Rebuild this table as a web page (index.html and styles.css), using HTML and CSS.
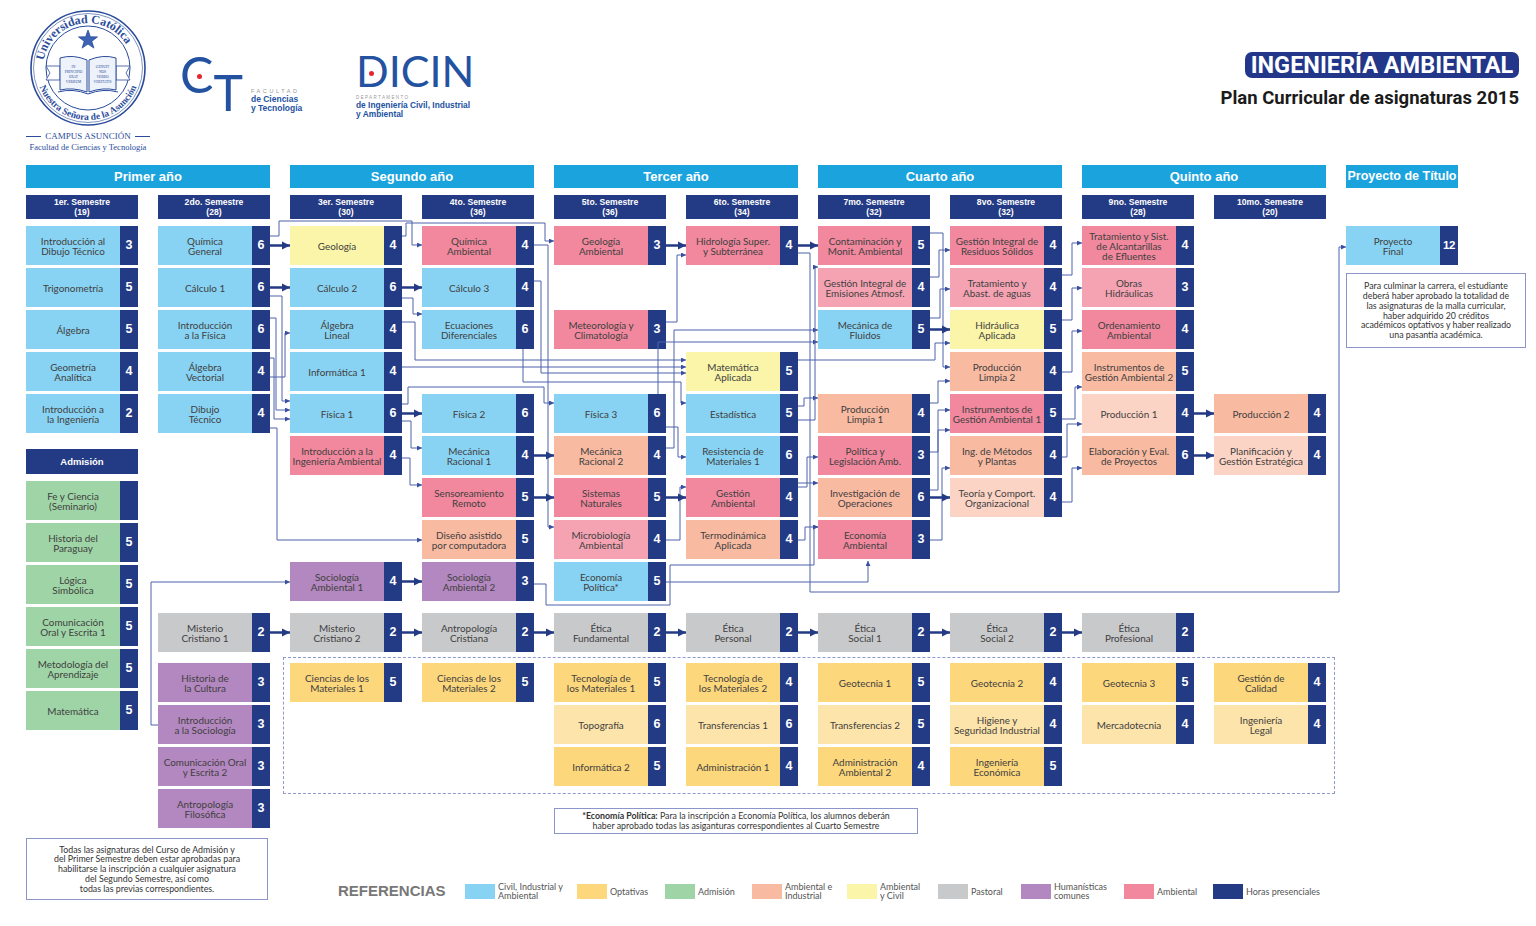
FILE: index.html
```html
<!DOCTYPE html>
<html lang="es">
<head>
<meta charset="utf-8">
<title>Ingeniería Ambiental - Plan Curricular 2015</title>
<link rel="stylesheet" href="styles.css">
</head>
<body>
<div class="page">
  <header class="top">
    <div class="seal-block">
      <svg class="seal" viewBox="0 0 124 122" aria-label="Universidad Católica">
        <defs>
          <path id="arcTop" d="M19.7 75.4 A45 45 0 1 1 104.3 75.4"/>
          <path id="arcBot" d="M10.8 51 A52 52 0 1 0 113.2 51"/>
        </defs>
        <circle cx="62" cy="60" r="57" fill="none" stroke="#2b4c9b" stroke-width="1.6"/>
        <circle cx="62" cy="60" r="54.5" fill="none" stroke="#2b4c9b" stroke-width=".6"/>
        <circle cx="62" cy="60" r="42" fill="none" stroke="#2b4c9b" stroke-width="1"/>
        <text class="seal-top"><textPath href="#arcTop" startOffset="45%" text-anchor="middle">Universidad Católica</textPath></text>
        <text class="seal-bot"><textPath href="#arcBot" startOffset="50%" text-anchor="middle">Nuestra Señora de la Asunción</textPath></text>
        <polygon points="62,22 64.35,28.76 71.51,28.91 65.8,33.24 67.88,40.09 62,36 56.12,40.09 58.2,33.24 52.49,28.91 59.65,28.76" fill="#3d63b5" stroke="#2b4c9b" stroke-width=".8"/>
        <path d="M20 58 L34 58 L34 72 L20 72 L24 65 Z" fill="#fff" stroke="#2b4c9b" stroke-width=".8"/>
        <path d="M90 58 L104 58 L100 65 L104 72 L90 72 Z" fill="#fff" stroke="#2b4c9b" stroke-width=".8"/>
        <path d="M34 50 Q47 46 61 52 L61 84 Q47 79 34 82 Z" fill="#eef2fa" stroke="#2b4c9b" stroke-width="1"/>
        <path d="M63 52 Q77 46 90 50 L90 82 Q77 79 63 84 Z" fill="#eef2fa" stroke="#2b4c9b" stroke-width="1"/>
        <path d="M32 84 Q47 80 62 86 Q77 80 92 84" fill="none" stroke="#2b4c9b" stroke-width="1"/>
        <g class="book-txt">
          <text x="47.5" y="60">IN</text>
          <text x="47.5" y="65">PRINCIPIO</text>
          <text x="47.5" y="70">ERAT</text>
          <text x="47.5" y="75">VERBUM</text>
          <text x="76.5" y="60">GENUIT</text>
          <text x="76.5" y="65">NOS</text>
          <text x="76.5" y="70">VERBO</text>
          <text x="76.5" y="75">VERITATIS</text>
        </g>
      </svg>
      <div class="campus">CAMPUS ASUNCIÓN</div>
      <div class="fac">Facultad de Ciencias y Tecnología</div>
    </div>

    <div class="ct">
      <div class="ct-mark"><span class="ct-c">C</span><span class="ct-t">T</span><span class="reddot ct-dot"></span></div>
      <div class="ct-txt"><span class="spaced">FACULTAD</span><b>de Ciencias</b><b>y Tecnología</b></div>
    </div>

    <div class="dicin">
      <div class="dicin-word">DICIN<span class="reddot dicin-dot"></span></div>
      <div class="dicin-sub"><span class="spaced small">DEPARTAMENTO</span><b>de Ingeniería Civil, Industrial</b><b>y Ambiental</b></div>
    </div>

    <div class="title">
      <div class="pill">INGENIERÍA AMBIENTAL</div>
      <div class="subtitle">Plan Curricular de asignaturas 2015</div>
    </div>
  </header>

  <main class="chart">
    <div class="optbox"></div>

    <div class="year k1 span2">Primer año</div>
    <div class="year k3 span2">Segundo año</div>
    <div class="year k5 span2">Tercer año</div>
    <div class="year k7 span2">Cuarto año</div>
    <div class="year k9 span2">Quinto año</div>
    <div class="year k11">Proyecto de Título</div>

    <div class="sem k1">1er. Semestre<br>(19)</div>
    <div class="sem k2">2do. Semestre<br>(28)</div>
    <div class="sem k3">3er. Semestre<br>(30)</div>
    <div class="sem k4">4to. Semestre<br>(36)</div>
    <div class="sem k5">5to. Semestre<br>(36)</div>
    <div class="sem k6">6to. Semestre<br>(34)</div>
    <div class="sem k7">7mo. Semestre<br>(32)</div>
    <div class="sem k8">8vo. Semestre<br>(32)</div>
    <div class="sem k9">9no. Semestre<br>(28)</div>
    <div class="sem k10">10mo. Semestre<br>(20)</div>

    <!-- 1er semestre -->
    <div class="cell blue k1 r1"><span class="nm">Introducción al<br>Dibujo Técnico</span><b class="hr">3</b></div>
    <div class="cell blue k1 r2"><span class="nm">Trigonometría</span><b class="hr">5</b></div>
    <div class="cell blue k1 r3"><span class="nm">Álgebra</span><b class="hr">5</b></div>
    <div class="cell blue k1 r4"><span class="nm">Geometría<br>Analítica</span><b class="hr">4</b></div>
    <div class="cell blue k1 r5"><span class="nm">Introducción a<br>la Ingeniería</span><b class="hr">2</b></div>

    <div class="admis">
      <div class="admis-h">Admisión</div>
      <div class="cell green"><span class="nm">Fe y Ciencia<br>(Seminario)</span><b class="hr"></b></div>
      <div class="cell green"><span class="nm">Historia del<br>Paraguay</span><b class="hr">5</b></div>
      <div class="cell green"><span class="nm">Lógica<br>Simbólica</span><b class="hr">5</b></div>
      <div class="cell green"><span class="nm">Comunicación<br>Oral y Escrita 1</span><b class="hr">5</b></div>
      <div class="cell green"><span class="nm">Metodología del<br>Aprendizaje</span><b class="hr">5</b></div>
      <div class="cell green"><span class="nm">Matemática</span><b class="hr">5</b></div>
    </div>

    <!-- 2do semestre -->
    <div class="cell blue k2 r1"><span class="nm">Química<br>General</span><b class="hr">6</b></div>
    <div class="cell blue k2 r2"><span class="nm">Cálculo 1</span><b class="hr">6</b></div>
    <div class="cell blue k2 r3"><span class="nm">Introducción<br>a la Física</span><b class="hr">6</b></div>
    <div class="cell blue k2 r4"><span class="nm">Álgebra<br>Vectorial</span><b class="hr">4</b></div>
    <div class="cell blue k2 r5"><span class="nm">Dibujo<br>Técnico</span><b class="hr">4</b></div>
    <div class="cell gray k2 rp"><span class="nm">Misterio<br>Cristiano 1</span><b class="hr">2</b></div>
    <div class="cell purple k2 o1"><span class="nm">Historia de<br>la Cultura</span><b class="hr">3</b></div>
    <div class="cell purple k2 o2"><span class="nm">Introducción<br>a la Sociología</span><b class="hr">3</b></div>
    <div class="cell purple k2 o3"><span class="nm">Comunicación Oral<br>y Escrita 2</span><b class="hr">3</b></div>
    <div class="cell purple k2 o4"><span class="nm">Antropología<br>Filosófica</span><b class="hr">3</b></div>

    <!-- 3er semestre -->
    <div class="cell yellow k3 r1"><span class="nm">Geología</span><b class="hr">4</b></div>
    <div class="cell blue k3 r2"><span class="nm">Cálculo 2</span><b class="hr">6</b></div>
    <div class="cell blue k3 r3"><span class="nm">Álgebra<br>Lineal</span><b class="hr">4</b></div>
    <div class="cell blue k3 r4"><span class="nm">Informática 1</span><b class="hr">4</b></div>
    <div class="cell blue k3 r5"><span class="nm">Física 1</span><b class="hr">6</b></div>
    <div class="cell pink k3 r6"><span class="nm">Introducción a la<br>Ingeniería Ambiental</span><b class="hr">4</b></div>
    <div class="cell purple k3 r9"><span class="nm">Sociología<br>Ambiental 1</span><b class="hr">4</b></div>
    <div class="cell gray k3 rp"><span class="nm">Misterio<br>Cristiano 2</span><b class="hr">2</b></div>
    <div class="cell opt k3 o1"><span class="nm">Ciencias de los<br>Materiales 1</span><b class="hr">5</b></div>

    <!-- 4to semestre -->
    <div class="cell pink k4 r1"><span class="nm">Química<br>Ambiental</span><b class="hr">4</b></div>
    <div class="cell blue k4 r2"><span class="nm">Cálculo 3</span><b class="hr">4</b></div>
    <div class="cell blue k4 r3"><span class="nm">Ecuaciones<br>Diferenciales</span><b class="hr">6</b></div>
    <div class="cell blue k4 r5"><span class="nm">Física 2</span><b class="hr">6</b></div>
    <div class="cell blue k4 r6"><span class="nm">Mecánica<br>Racional 1</span><b class="hr">4</b></div>
    <div class="cell pink k4 r7"><span class="nm">Sensoreamiento<br>Remoto</span><b class="hr">5</b></div>
    <div class="cell salmon k4 r8"><span class="nm">Diseño asistido<br>por computadora</span><b class="hr">5</b></div>
    <div class="cell purple k4 r9"><span class="nm">Sociología<br>Ambiental 2</span><b class="hr">3</b></div>
    <div class="cell gray k4 rp"><span class="nm">Antropología<br>Cristiana</span><b class="hr">2</b></div>
    <div class="cell opt k4 o1"><span class="nm">Ciencias de los<br>Materiales 2</span><b class="hr">5</b></div>

    <!-- 5to semestre -->
    <div class="cell pink k5 r1"><span class="nm">Geología<br>Ambiental</span><b class="hr">3</b></div>
    <div class="cell pink k5 r3"><span class="nm">Meteorología y<br>Climatología</span><b class="hr">3</b></div>
    <div class="cell blue k5 r5"><span class="nm">Física 3</span><b class="hr">6</b></div>
    <div class="cell salmon k5 r6"><span class="nm">Mecánica<br>Racional 2</span><b class="hr">4</b></div>
    <div class="cell pink k5 r7"><span class="nm">Sistemas<br>Naturales</span><b class="hr">5</b></div>
    <div class="cell lpink k5 r8"><span class="nm">Microbiología<br>Ambiental</span><b class="hr">4</b></div>
    <div class="cell blue k5 r9"><span class="nm">Economía<br>Política*</span><b class="hr">5</b></div>
    <div class="cell gray k5 rp"><span class="nm">Ética<br>Fundamental</span><b class="hr">2</b></div>
    <div class="cell opt k5 o1"><span class="nm">Tecnología de<br>los Materiales 1</span><b class="hr">5</b></div>
    <div class="cell optl k5 o2"><span class="nm">Topografía</span><b class="hr">6</b></div>
    <div class="cell opt k5 o3"><span class="nm">Informática 2</span><b class="hr">5</b></div>

    <!-- 6to semestre -->
    <div class="cell pink k6 r1"><span class="nm">Hidrología Super.<br>y Subterránea</span><b class="hr">4</b></div>
    <div class="cell yellow k6 r4"><span class="nm">Matemática<br>Aplicada</span><b class="hr">5</b></div>
    <div class="cell blue k6 r5"><span class="nm">Estadística</span><b class="hr">5</b></div>
    <div class="cell blue k6 r6"><span class="nm">Resistencia de<br>Materiales 1</span><b class="hr">6</b></div>
    <div class="cell pink k6 r7"><span class="nm">Gestión<br>Ambiental</span><b class="hr">4</b></div>
    <div class="cell salmon k6 r8"><span class="nm">Termodinámica<br>Aplicada</span><b class="hr">4</b></div>
    <div class="cell gray k6 rp"><span class="nm">Ética<br>Personal</span><b class="hr">2</b></div>
    <div class="cell opt k6 o1"><span class="nm">Tecnología de<br>los Materiales 2</span><b class="hr">4</b></div>
    <div class="cell optl k6 o2"><span class="nm">Transferencias 1</span><b class="hr">6</b></div>
    <div class="cell opt k6 o3"><span class="nm">Administración 1</span><b class="hr">4</b></div>

    <!-- 7mo semestre -->
    <div class="cell pink k7 r1"><span class="nm">Contaminación y<br>Monit. Ambiental</span><b class="hr">5</b></div>
    <div class="cell lpink k7 r2"><span class="nm">Gestión Integral de<br>Emisiones Atmosf.</span><b class="hr">4</b></div>
    <div class="cell blue k7 r3"><span class="nm">Mecánica de<br>Fluidos</span><b class="hr">5</b></div>
    <div class="cell salmon k7 r5"><span class="nm">Producción<br>Limpia 1</span><b class="hr">4</b></div>
    <div class="cell pink k7 r6"><span class="nm">Política y<br>Legislación Amb.</span><b class="hr">3</b></div>
    <div class="cell salmon k7 r7"><span class="nm">Investigación de<br>Operaciones</span><b class="hr">6</b></div>
    <div class="cell pink k7 r8"><span class="nm">Economía<br>Ambiental</span><b class="hr">3</b></div>
    <div class="cell gray k7 rp"><span class="nm">Ética<br>Social 1</span><b class="hr">2</b></div>
    <div class="cell opt k7 o1"><span class="nm">Geotecnia 1</span><b class="hr">5</b></div>
    <div class="cell optl k7 o2"><span class="nm">Transferencias 2</span><b class="hr">5</b></div>
    <div class="cell opt k7 o3"><span class="nm">Administración<br>Ambiental 2</span><b class="hr">4</b></div>

    <!-- 8vo semestre -->
    <div class="cell pink k8 r1"><span class="nm">Gestión Integral de<br>Residuos Sólidos</span><b class="hr">4</b></div>
    <div class="cell lpink k8 r2"><span class="nm">Tratamiento y<br>Abast. de aguas</span><b class="hr">4</b></div>
    <div class="cell yellow k8 r3"><span class="nm">Hidráulica<br>Aplicada</span><b class="hr">5</b></div>
    <div class="cell salmon k8 r4"><span class="nm">Producción<br>Limpia 2</span><b class="hr">4</b></div>
    <div class="cell pink k8 r5"><span class="nm">Instrumentos de<br>Gestión Ambiental 1</span><b class="hr">5</b></div>
    <div class="cell salmon k8 r6"><span class="nm">Ing. de Métodos<br>y Plantas</span><b class="hr">4</b></div>
    <div class="cell lsalmon k8 r7"><span class="nm">Teoría y Comport.<br>Organizacional</span><b class="hr">4</b></div>
    <div class="cell gray k8 rp"><span class="nm">Ética<br>Social 2</span><b class="hr">2</b></div>
    <div class="cell opt k8 o1"><span class="nm">Geotecnia 2</span><b class="hr">4</b></div>
    <div class="cell optl k8 o2"><span class="nm">Higiene y<br>Seguridad Industrial</span><b class="hr">4</b></div>
    <div class="cell opt k8 o3"><span class="nm">Ingeniería<br>Económica</span><b class="hr">5</b></div>

    <!-- 9no semestre -->
    <div class="cell pink k9 r1"><span class="nm">Tratamiento y Sist.<br>de Alcantarillas<br>de Efluentes</span><b class="hr">4</b></div>
    <div class="cell lpink k9 r2"><span class="nm">Obras<br>Hidráulicas</span><b class="hr">3</b></div>
    <div class="cell pink k9 r3"><span class="nm">Ordenamiento<br>Ambiental</span><b class="hr">4</b></div>
    <div class="cell salmon k9 r4"><span class="nm">Instrumentos de<br>Gestión Ambiental 2</span><b class="hr">5</b></div>
    <div class="cell lsalmon k9 r5"><span class="nm">Producción 1</span><b class="hr">4</b></div>
    <div class="cell salmon k9 r6"><span class="nm">Elaboración y Eval.<br>de Proyectos</span><b class="hr">6</b></div>
    <div class="cell gray k9 rp"><span class="nm">Ética<br>Profesional</span><b class="hr">2</b></div>
    <div class="cell opt k9 o1"><span class="nm">Geotecnia 3</span><b class="hr">5</b></div>
    <div class="cell optl k9 o2"><span class="nm">Mercadotecnia</span><b class="hr">4</b></div>

    <!-- 10mo semestre -->
    <div class="cell salmon k10 r5"><span class="nm">Producción 2</span><b class="hr">4</b></div>
    <div class="cell lsalmon k10 r6"><span class="nm">Planificación y<br>Gestión Estratégica</span><b class="hr">4</b></div>
    <div class="cell opt k10 o1"><span class="nm">Gestión de<br>Calidad</span><b class="hr">4</b></div>
    <div class="cell optl k10 o2"><span class="nm">Ingeniería<br>Legal</span><b class="hr">4</b></div>

    <!-- Proyecto -->
    <div class="cell blue k11 r1"><span class="nm">Proyecto<br>Final</span><b class="hr">12</b></div>
    <div class="note note-pf">Para culminar la carrera, el estudiante<br>deberá haber aprobado la totalidad de<br>las asignaturas de la malla curricular,<br>haber adquirido 20 créditos<br>académicos optativos y haber realizado<br>una pasantía académica.</div>

    <div class="note note-ep"><span><b>*Economía Política:</b> Para la inscripción a Economía Política, los alumnos deberán<br>haber aprobado todas las asiganturas correspondientes al Cuarto Semestre</span></div>
  </main>

  <footer class="foot">
    <div class="note note-adm">Todas las asignaturas del Curso de Admisión y<br>del Primer Semestre deben estar aprobadas para<br>habilitarse la inscripción a cualquier asignatura<br>del Segundo Semestre, así como<br>todas las previas correspondientes.</div>
    <div class="legend">
      <div class="ref">REFERENCIAS</div>
      <div class="lg"><i class="sw blue"></i><span>Civil, Industrial y<br>Ambiental</span></div>
      <div class="lg"><i class="sw opt"></i><span>Optativas</span></div>
      <div class="lg"><i class="sw green"></i><span>Admisión</span></div>
      <div class="lg"><i class="sw salmon"></i><span>Ambiental e<br>Industrial</span></div>
      <div class="lg"><i class="sw yellow"></i><span>Ambiental<br>y Civil</span></div>
      <div class="lg"><i class="sw gray"></i><span>Pastoral</span></div>
      <div class="lg"><i class="sw purple"></i><span>Humanísticas<br>comunes</span></div>
      <div class="lg"><i class="sw pink"></i><span>Ambiental</span></div>
      <div class="lg"><i class="sw navy"></i><span>Horas presenciales</span></div>
    </div>
  </footer>

  <svg class="links" width="1536" height="926" viewBox="0 0 1536 926">
    <defs>
      <marker id="ah" viewBox="0 0 10 10" refX="10" refY="5" markerWidth="8" markerHeight="9" markerUnits="userSpaceOnUse" orient="auto"><path d="M0,0 L10,5 L0,10 z" fill="#233a85"/></marker>
      <marker id="as" viewBox="0 0 10 10" refX="10" refY="5" markerWidth="5" markerHeight="5" markerUnits="userSpaceOnUse" orient="auto"><path d="M0,0 L10,5 L0,10 z" fill="#3a4f9f"/></marker>
    </defs>
    <g class="thin">
      <path d="M270 236 H279 V221 H412 V245 H422"/>
      <path d="M402 236 H406 V223 H545 V241 H554"/>
      <path d="M270 296 H282 V401 H290"/>
      <path d="M270 318 H276 V410 H290"/>
      <path d="M270 358 H274 V419 H290"/>
      <path d="M270 377 H285 V333 H290"/>
      <path d="M270 428 H277 V540 H422"/>
      <path d="M402 298 H413 V314 H422"/>
      <path d="M402 322 H415 V360 H686"/>
      <path d="M402 367 H686"/>
      <path d="M534 281 H541 V373 H686"/>
      <path d="M523 349 V382 H681 V403 H686"/>
      <path d="M402 404 H408 V387 H544 V403 H554"/>
      <path d="M402 421 H411 V448 H422"/>
      <path d="M402 458 H410 V485 H422"/>
      <path d="M534 245 H548 V527 H554"/>
      <path d="M666 322 H677 V255 H686"/>
      <path d="M658 394 V342 H818"/>
      <path d="M666 448 H674 V330 H818"/>
      <path d="M666 427 H678 V457 H686"/>
      <path d="M666 540 H680 V487 H686"/>
      <path d="M666 582 H868 V561"/>
      <path d="M534 584 H546 V605 H670 V565 H814 V527 H818"/>
      <path d="M798 253 H810 V592 H1339 V247 H1346"/>
      <path d="M798 360 H935 V343 H950"/>
      <path d="M798 406 H804 V398 H818"/>
      <path d="M798 420 H815 V267 H818"/>
      <path d="M798 487 H807 V457 H818"/>
      <path d="M798 483 H818"/>
      <path d="M798 540 H805 V527 H818"/>
      <path d="M930 233 H943 V367 H950"/>
      <path d="M930 277 H939 V250 H950"/>
      <path d="M930 318 H940 V289 H950"/>
      <path d="M930 403 H938 V381 H950"/>
      <path d="M930 452 H938 V410 H950"/>
      <path d="M930 490 H938 V430 H950"/>
      <path d="M930 540 H942 V468 H950"/>
      <path d="M1062 275 H1072 V243 H1082"/>
      <path d="M1062 320 H1072 V288 H1082"/>
      <path d="M1062 372 H1072 V331 H1082"/>
      <path d="M1062 419 H1075 V387 H1082"/>
      <path d="M1062 457 H1067 V424 H1082"/>
      <path d="M1062 502 H1072 V468 H1082"/>
      <path d="M158 725 H151 V582 H290"/>
    </g>
    <g class="thick">
      <path d="M270 245.5 H290"/>
      <path d="M270 287.5 H290"/>
      <path d="M402 287.5 H422"/>
      <path d="M402 413.5 H422"/>
      <path d="M534 455.5 H554"/>
      <path d="M534 497.5 H554"/>
      <path d="M402 581.5 H422"/>
      <path d="M666 245.5 H686"/>
      <path d="M666 497.5 H686"/>
      <path d="M798 245.5 H818"/>
      <path d="M930 329.5 H950"/>
      <path d="M930 497.5 H950"/>
      <path d="M1194 413.5 H1214"/>
      <path d="M1194 455.5 H1214"/>
      <path d="M270 632.5 H290"/>
      <path d="M402 632.5 H422"/>
      <path d="M534 632.5 H554"/>
      <path d="M666 632.5 H686"/>
      <path d="M798 632.5 H818"/>
      <path d="M930 632.5 H950"/>
      <path d="M1062 632.5 H1082"/>
    </g>
  </svg>
</div>
</body>
</html>
```

FILE: styles.css
```css
* { box-sizing: border-box; }
body { margin: 0; background: #fff; }

.page {
  position: relative;
  width: 1536px;
  height: 926px;
  overflow: hidden;
  background: #fff;
  font-family: Lato, "Noto Sans", sans-serif;
  color: #3a3a3a;
}

/* ---------- header ---------- */
.top {
  display: flex;
  height: 160px;
  padding: 0 17px 0 26px;
}
.seal-block {
  width: 124px;
  flex-shrink: 0;
  display: flex;
  flex-direction: column;
  align-items: center;
}
.seal { width: 124px; height: 122px; margin-top: 8px; display: block; }
.seal-top { font-family: "Liberation Serif", serif; font-weight: bold; font-size: 12px; fill: #2b4c9b; }
.seal-bot { font-family: "Liberation Serif", serif; font-weight: bold; font-size: 9.5px; fill: #2b4c9b; }
.book-txt text { font-family: "Liberation Serif", serif; font-size: 3.6px; fill: #2b4c9b; text-anchor: middle; }
.campus {
  display: flex;
  align-items: center;
  gap: 4px;
  margin-top: 1px;
  font-family: "Liberation Serif", serif;
  font-size: 9px;
  line-height: 11px;
  color: #2b4c9b;
  white-space: nowrap;
}
.campus::before, .campus::after {
  content: "";
  width: 15px;
  height: 1px;
  background: #2b4c9b;
}
.fac {
  font-family: "Liberation Serif", serif;
  font-size: 8.5px;
  line-height: 11px;
  color: #2b4c9b;
  white-space: nowrap;
}

.ct {
  width: 150px;
  flex-shrink: 0;
  margin: 49px 0 0 30px;
  display: flex;
  align-items: flex-start;
}
.ct-mark { position: relative; display: flex; align-items: flex-start; }
.ct-c { font: 400 50px/1 Lato, sans-serif; color: #2352a1; }
.ct-t { font: 400 50px/1 Lato, sans-serif; color: #2352a1; margin: 18px 0 0 0; }
.reddot {
  position: absolute;
  width: 5px;
  height: 5px;
  border-radius: 50%;
  background: #e52630;
}
.ct-dot { left: 17px; top: 25px; }
.ct-txt {
  display: flex;
  flex-direction: column;
  margin: 38px 0 0 8px;
  color: #2352a1;
  font-family: "Liberation Sans", sans-serif;
  font-size: 8.5px;
  line-height: 9px;
  white-space: nowrap;
}
.spaced { font-size: 5.5px; line-height: 8px; letter-spacing: 2.6px; color: #9a9a9a; font-weight: normal; }
.spaced.small { font-size: 4.5px; letter-spacing: 1.4px; line-height: 7px; }

.dicin {
  margin: 48px 0 0 26px;
  display: flex;
  flex-direction: column;
}
.dicin-word {
  position: relative;
  font: 400 43px/46px Lato, sans-serif;
  color: #2352a1;
  letter-spacing: 0;
}
.dicin-dot { left: 13px; top: 23px; }
.dicin-sub {
  display: flex;
  flex-direction: column;
  color: #2352a1;
  font-family: "Liberation Sans", sans-serif;
  font-size: 8.4px;
  line-height: 9px;
  white-space: nowrap;
}

.title {
  margin-left: auto;
  padding-top: 52px;
  display: flex;
  flex-direction: column;
  align-items: flex-end;
}
.pill {
  width: 274px;
  height: 26px;
  border-radius: 7px;
  background: #23378a;
  color: #fff;
  font: 700 23.5px/27px Roboto, "Liberation Sans", sans-serif;
  text-align: center;
  white-space: nowrap;
}
.subtitle {
  margin-top: 9px;
  font: 700 18.5px/22px Roboto, "Liberation Sans", sans-serif;
  color: #1b1b1b;
  white-space: nowrap;
}

/* ---------- chart ---------- */
.chart {
  display: grid;
  margin: 5px 0 0 26px;
  grid-template-columns: repeat(11, 112px);
  column-gap: 20px;
  row-gap: 3px;
  grid-template-rows: 27px 28px repeat(9, 39px) 6px 39px 5px 39px 39px 39px 39px;
}
.k1 { grid-column: 1; }
.k2 { grid-column: 2; }
.k3 { grid-column: 3; }
.k4 { grid-column: 4; }
.k5 { grid-column: 5; }
.k6 { grid-column: 6; }
.k7 { grid-column: 7; }
.k8 { grid-column: 8; }
.k9 { grid-column: 9; }
.k10 { grid-column: 10; }
.k11 { grid-column: 11; }
.span2 { grid-column-end: span 2; }
.r1 { grid-row: 3; }
.r2 { grid-row: 4; }
.r3 { grid-row: 5; }
.r4 { grid-row: 6; }
.r5 { grid-row: 7; }
.r6 { grid-row: 8; }
.r7 { grid-row: 9; }
.r8 { grid-row: 10; }
.r9 { grid-row: 11; }
.rp { grid-row: 13; }
.o1 { grid-row: 15; }
.o2 { grid-row: 16; }
.o3 { grid-row: 17; }
.o4 { grid-row: 18; }

.year {
  grid-row: 1;
  align-self: start;
  height: 23px;
  background: #1ba3dd;
  color: #fff;
  font: 700 13px/23px "Liberation Sans", Arial, sans-serif;
  text-align: center;
  white-space: nowrap;
}
.year.k11 { font-size: 12.5px; }
.sem {
  grid-row: 2;
  align-self: start;
  height: 24px;
  background: #233a85;
  color: #fff;
  font: 700 8.6px/10.5px "Liberation Sans", Arial, sans-serif;
  text-align: center;
  padding-top: 1.5px;
  white-space: nowrap;
}

.cell {
  display: flex;
  height: 39px;
}
.nm {
  flex: 1;
  min-width: 0;
  display: flex;
  align-items: center;
  justify-content: center;
  text-align: center;
  font-size: 9.9px;
  line-height: 10px;
  color: #404040;
  white-space: nowrap;
}
.hr {
  width: 18px;
  flex-shrink: 0;
  background: #233a85;
  color: #fff;
  display: flex;
  align-items: center;
  justify-content: center;
  font: 700 12.5px/1 "Liberation Sans", Arial, sans-serif;
}
.k11 .hr { font-size: 11.5px; letter-spacing: -0.3px; }

.blue { background: #88d3f3; }
.pink { background: #f2889e; }
.lpink { background: #f5a3b3; }
.salmon { background: #f9baa2; }
.lsalmon { background: #fcd4c5; }
.yellow { background: #faf5a8; }
.opt { background: #fdd77c; }
.optl { background: #fde4aa; }
.green { background: #9fd5a6; }
.gray { background: #c8c9cb; }
.purple { background: #b387bf; }
.navy { background: #233a85; }

.admis {
  grid-column: 1;
  grid-row: 8 / 19;
  align-self: start;
  margin-top: 13px;
  display: flex;
  flex-direction: column;
  gap: 3px;
}
.admis-h {
  height: 25px;
  margin-bottom: 4px;
  background: #233a85;
  color: #fff;
  font: 700 9.5px/25px "Liberation Sans", Arial, sans-serif;
  text-align: center;
}

.optbox {
  grid-column: 3 / 11;
  grid-row: 15 / 18;
  margin: -6px -9px -8px -7px;
  border: 1px dashed #8f99cc;
}

.note {
  border: 1px solid #8b95c9;
  background: #fff;
  font-size: 8.8px;
  line-height: 9.8px;
  color: #333;
  text-align: center;
  white-space: nowrap;
  display: flex;
  align-items: center;
  justify-content: center;
}
.note-pf {
  grid-column: 11;
  grid-row: 4 / 6;
  justify-self: start;
  align-self: start;
  width: 180px;
  height: 75px;
  margin-top: 5px;
}
.note-ep {
  grid-column: 5 / 8;
  grid-row: 18;
  justify-self: start;
  align-self: start;
  width: 364px;
  height: 26px;
  margin-top: 19px;
}
.note-ep b { font-weight: 700; }

/* ---------- footer ---------- */
.foot {
  display: flex;
  margin: 10px 0 0 26px;
}
.note-adm {
  width: 242px;
  height: 62px;
  flex-shrink: 0;
}
.legend {
  align-self: flex-end;
  margin: 0 0 2px 70px;
  display: grid;
  grid-template-columns: 127px 112px 88px 87px 95px 91px 83px 103px 89px auto;
  align-items: center;
  height: 16px;
}
.ref {
  font: 700 15px/16px "Liberation Sans", Arial, sans-serif;
  color: #777;
  white-space: nowrap;
}
.lg {
  display: flex;
  align-items: center;
  gap: 3px;
  font-size: 9px;
  line-height: 9px;
  color: #555;
  white-space: nowrap;
}
.sw {
  display: block;
  width: 30px;
  height: 15px;
  flex-shrink: 0;
}

/* ---------- connectors overlay ---------- */
.links {
  position: absolute;
  left: 0;
  top: 0;
  pointer-events: none;
}
.thin path {
  fill: none;
  stroke: #4f62ab;
  stroke-width: 1;
  marker-end: url(#as);
}
.thick path {
  fill: none;
  stroke: #233a85;
  stroke-width: 2.5;
  marker-end: url(#ah);
}
```
